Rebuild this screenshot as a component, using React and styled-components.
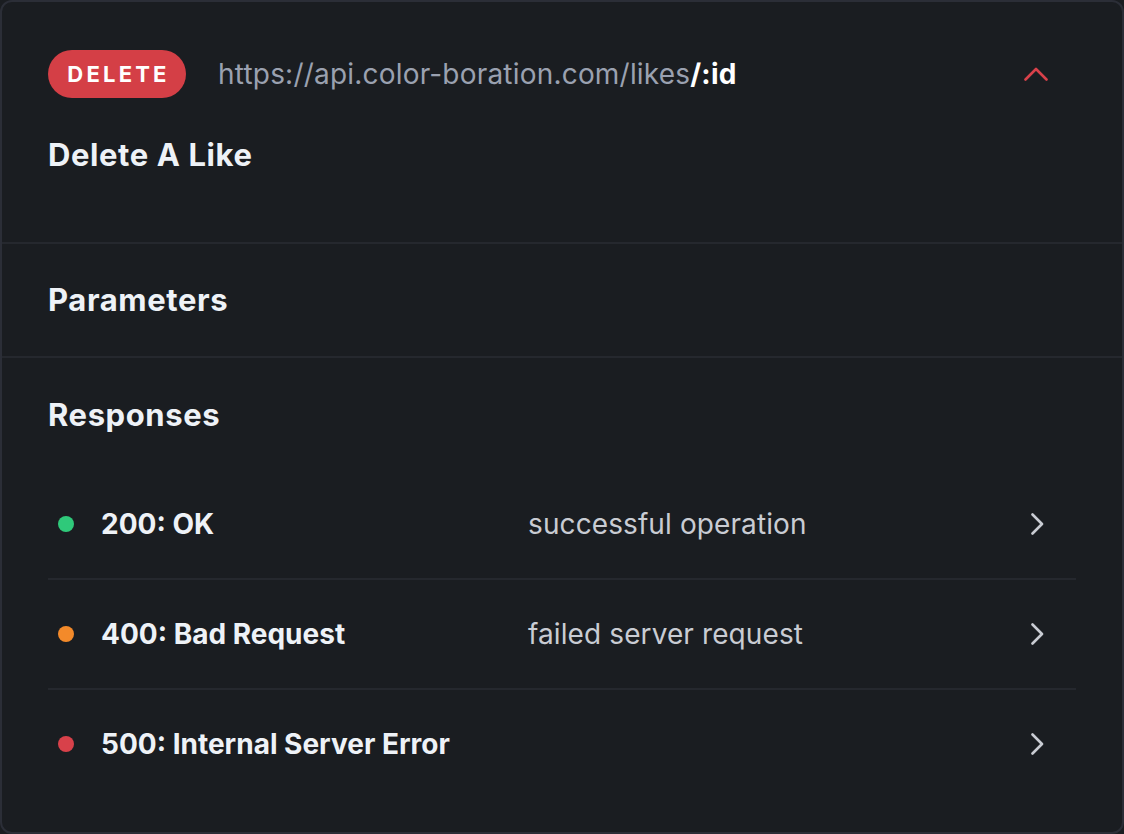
import styled, { createGlobalStyle } from 'styled-components'

const GlobalStyle = createGlobalStyle`
  html, body {
    margin: 0;
    padding: 0;
    background: #1a1d21;
  }
  body {
    font-family: Inter, "Noto Sans", sans-serif;
    -webkit-font-smoothing: antialiased;
  }
`

const responses = [
  { code: '200: OK', text: 'successful operation', color: '#2fc97a' },
  { code: '400: Bad Request', text: 'failed server request', color: '#f38a2a' },
  { code: '500: Internal Server Error', text: '', color: '#d8414a' },
]

const ChevronUp = () => (
  <svg width="24" height="14" viewBox="0 0 24 14" fill="none">
    <path d="M1.5 12.5 L12 2 L22.5 12.5" stroke="#d8414a" strokeWidth="2.6" strokeLinecap="round" strokeLinejoin="round" />
  </svg>
)

const ChevronRight = () => (
  <svg width="14" height="22" viewBox="0 0 14 22" fill="none">
    <path d="M2.5 1.5 L12 11 L2.5 20.5" stroke="#c9ccd3" strokeWidth="2.6" strokeLinecap="round" strokeLinejoin="round" />
  </svg>
)

const App = () => (
  <>
    <GlobalStyle />
    <Card>
      <Header>
        <TopRow>
          <Method>DELETE</Method>
          <Url>
            https://api.color-boration.com/likes<strong>/:id</strong>
          </Url>
          <Toggle><ChevronUp /></Toggle>
        </TopRow>
        <Title>Delete A Like</Title>
      </Header>
      <Section>
        <Title>Parameters</Title>
      </Section>
      <Section last>
        <Title>Responses</Title>
        <List>
          {responses.map((r) => (
            <Row key={r.code}>
              <Dot color={r.color} />
              <Code>{r.code}</Code>
              <Desc>{r.text}</Desc>
              <ChevronRight />
            </Row>
          ))}
        </List>
      </Section>
    </Card>
  </>
)

export default App

const Card = styled.div`
  box-sizing: border-box;
  height: 834px;
  border: 2px solid #2b2e37;
  border-radius: 12px;
  background: #1a1d21;
  overflow: hidden;
`

const Header = styled.div`
  padding: 48px 46px 69px;
  border-bottom: 2px solid #25282e;
`

const TopRow = styled.div`
  display: flex;
  align-items: center;
  height: 48px;
  margin-bottom: 39px;
`

const Method = styled.span`
  display: inline-flex;
  align-items: center;
  justify-content: center;
  width: 138px;
  height: 48px;
  border-radius: 24px;
  background: #d43f46;
  color: #fff;
  font-size: 22px;
  font-weight: 700;
  letter-spacing: 3.2px;
  text-indent: 3px;
`

const Url = styled.span`
  margin-left: 32px;
  font-size: 28px;
  letter-spacing: 0.2px;
  color: #9aa1b0;
  strong {
    color: #fff;
    font-weight: 700;
  }
`

const Toggle = styled.span`
  display: flex;
  margin-left: auto;
  margin-right: 28px;
`

const Title = styled.h2`
  margin: 0;
  font-size: 31px;
  line-height: 36px;
  font-weight: 700;
  letter-spacing: 0.6px;
  color: #eef2f7;
`

const Section = styled.div`
  padding: ${(p) => (p.last ? '39px 46px 0' : '38px 46px')};
  border-bottom: ${(p) => (p.last ? 'none' : '2px solid #25282e')};
`

const List = styled.div`
  margin-top: 37px;
`

const Row = styled.div`
  display: grid;
  grid-template-columns: 16px 400px 1fr 14px;
  column-gap: 27px;
  align-items: center;
  height: 108px;
  padding: 0 32px 0 10px;
  & + & {
    border-top: 2px solid #25282e;
  }
`

const Dot = styled.span`
  width: 16px;
  height: 16px;
  border-radius: 50%;
  background: ${(p) => p.color};
`

const Code = styled.span`
  font-size: 28px;
  font-weight: 700;
  color: #eef2f7;
`

const Desc = styled.span`
  font-size: 28px;
  letter-spacing: 0.1px;
  color: #c9ccd3;
`
